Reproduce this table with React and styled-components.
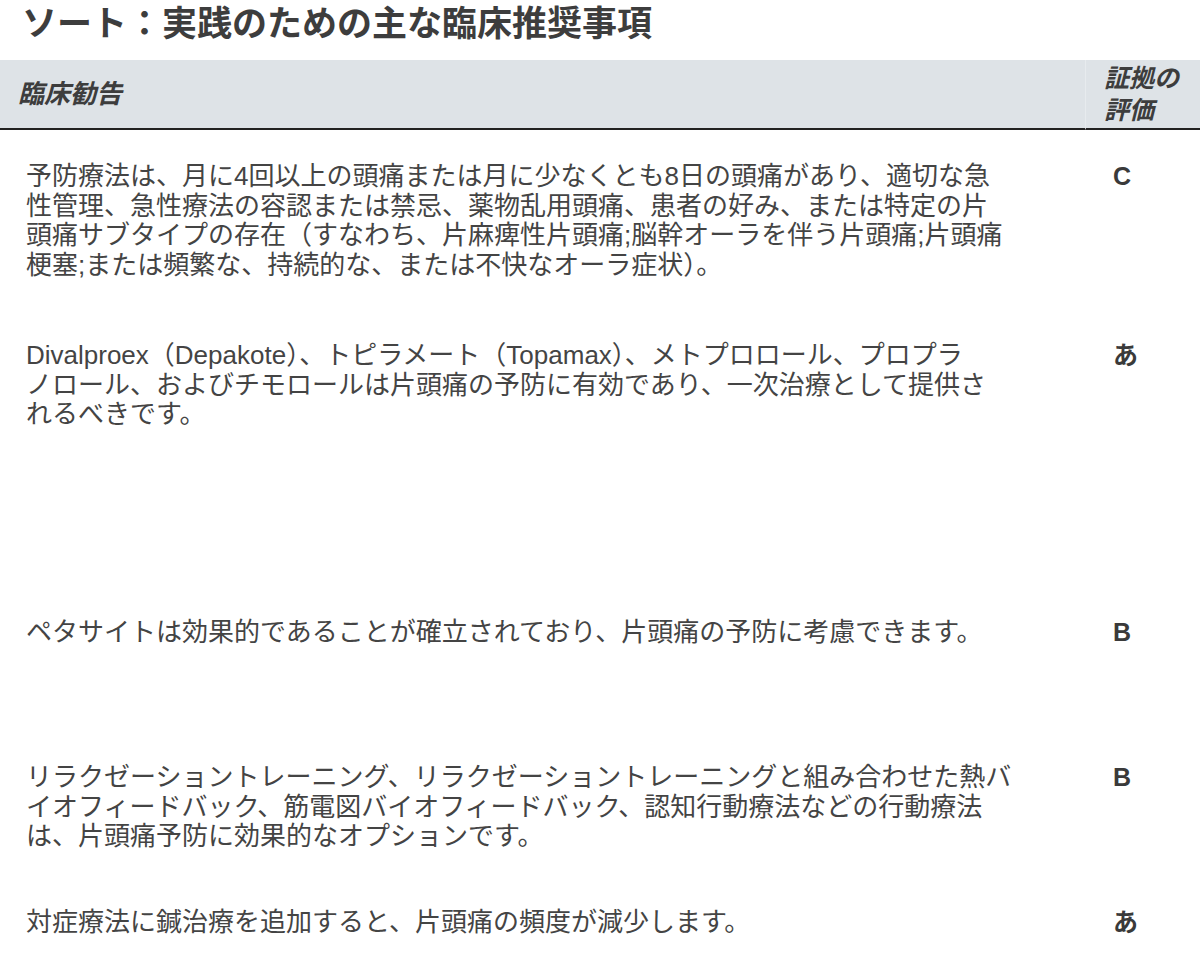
import React from "react";
import styled, { createGlobalStyle } from "styled-components";

const Global = createGlobalStyle`
  html, body { margin: 0; padding: 0; background: #fff; }
  body {
    font-family: "Liberation Sans", "Noto Sans CJK JP", sans-serif;
    color: #444;
  }
`;

const Page = styled.div`
  width: 1200px;
  overflow: hidden;
`;

const Title = styled.h1`
  margin: 0;
  height: 60px;
  padding: 0 0 0 22px;
  font-size: 35px;
  line-height: 42px;
  font-weight: 700;
  color: #3d3d3d;
  font-family: "Noto Sans CJK JP", sans-serif;
  white-space: nowrap;
`;

const Table = styled.div`
  display: grid;
  grid-template-columns: 1085px 115px;
`;

const HeadCell = styled.div`
  background: #dee3e7;
  border-bottom: 2px solid #222;
  height: 70px;
  box-sizing: border-box;
  padding: 0 0 4px 18px;
  display: flex;
  align-items: center;
  border-left: ${(p) => (p.$rating ? "1px solid #e7ebee" : "none")};
  font-family: "Noto Sans CJK JP", sans-serif;
  font-size: ${(p) => (p.$rating ? "25px" : "26px")};
  line-height: 32px;
  font-weight: 700;
  font-style: italic;
  color: #3d3d3d;
  white-space: nowrap;
`;

const TextCell = styled.div`
  box-sizing: border-box;
  min-height: ${(p) => p.$h}px;
  padding: 32px 0 0 26px;
`;

const Text = styled.p`
  margin: 0;
  width: 1030px;
  font-size: 26px;
  line-height: 29.5px;
  color: #444;
  white-space: nowrap;
`;

const RatingCell = styled.div`
  box-sizing: border-box;
  padding: 32px 0 0 28px;
  font-size: 25px;
  line-height: 29.5px;
  font-weight: 700;
  color: #3a3a3a;
`;

const rows = [
  {
    h: 179,
    lines: [
      "予防療法は、月に4回以上の頭痛または月に少なくとも8日の頭痛があり、適切な急",
      "性管理、急性療法の容認または禁忌、薬物乱用頭痛、患者の好み、または特定の片",
      "頭痛サブタイプの存在（すなわち、片麻痺性片頭痛;脳幹オーラを伴う片頭痛;片頭痛",
      "梗塞;または頻繁な、持続的な、または不快なオーラ症状）。",
    ],
    rating: "C",
  },
  {
    h: 277,
    lines: [
      "Divalproex（Depakote）、トピラメート（Topamax）、メトプロロール、プロプラ",
      "ノロール、およびチモロールは片頭痛の予防に有効であり、一次治療として提供さ",
      "れるべきです。",
    ],
    rating: "あ",
  },
  {
    h: 145,
    lines: ["ペタサイトは効果的であることが確立されており、片頭痛の予防に考慮できます。"],
    rating: "B",
  },
  {
    h: 145,
    lines: [
      "リラクゼーショントレーニング、リラクゼーショントレーニングと組み合わせた熱バ",
      "イオフィードバック、筋電図バイオフィードバック、認知行動療法などの行動療法",
      "は、片頭痛予防に効果的なオプションです。",
    ],
    rating: "B",
  },
  {
    h: 80,
    lines: ["対症療法に鍼治療を追加すると、片頭痛の頻度が減少します。"],
    rating: "あ",
  },
];

export default function App() {
  return (
    <Page>
      <Global />
      <Title>ソート：実践のための主な臨床推奨事項</Title>
      <Table>
        <HeadCell>臨床勧告</HeadCell>
        <HeadCell $rating>
          証拠の
          <br />
          評価
        </HeadCell>
        {rows.map((r, i) => (
          <React.Fragment key={i}>
            <TextCell $h={r.h}>
              <Text>
                {r.lines.map((l, j) => (
                  <React.Fragment key={j}>
                    {j > 0 && <br />}
                    {l}
                  </React.Fragment>
                ))}
              </Text>
            </TextCell>
            <RatingCell>{r.rating}</RatingCell>
          </React.Fragment>
        ))}
      </Table>
    </Page>
  );
}
